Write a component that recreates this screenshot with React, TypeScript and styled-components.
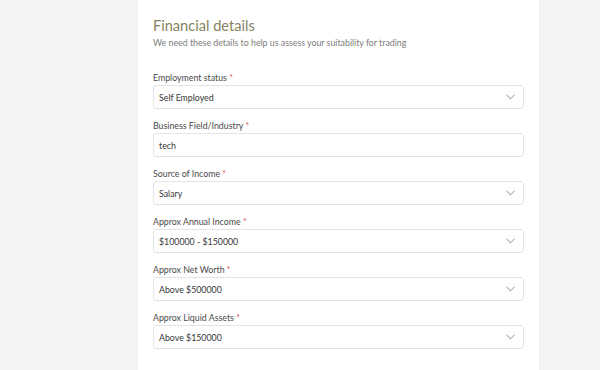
import React from "react";
import styled, { createGlobalStyle } from "styled-components";

const GlobalStyle = createGlobalStyle`
  html, body {
    margin: 0;
    padding: 0;
    background: #f3f3f5;
    font-family: Lato, "Open Sans", sans-serif;
  }
`;

const Page = styled.div`
  display: flex;
  justify-content: flex-start;
  padding-left: 138px;
  height: 370px;
  overflow: hidden;
`;

const Panel = styled.div`
  width: 401px;
  background: #ffffff;
  box-sizing: border-box;
  padding: 16px 15px 0 15px;
  min-height: 370px;
`;

const Title = styled.h2`
  margin: 0;
  font-size: 14.6px;
  font-weight: 400;
  color: #858260;
  line-height: 19px;
`;

const Subtitle = styled.p`
  margin: 1px 0 0;
  font-size: 8.8px;
  color: #7d7d7d;
  line-height: 13px;
`;

const Form = styled.div`
  display: flex;
  flex-direction: column;
  gap: 10px;
  margin-top: 22px;
  width: 371px;
`;

const Field = styled.div`
  display: flex;
  flex-direction: column;
  gap: 0;
`;

const Label = styled.label`
  font-size: 8.8px;
  color: #4a4a4a;
  line-height: 14px;
`;

const Star = styled.span`
  color: #d9534f;
`;

const Box = styled.div`
  height: 24px;
  box-sizing: border-box;
  border: 1px solid #e4e4e4;
  border-radius: 3px;
  display: flex;
  align-items: center;
  justify-content: space-between;
  padding: 0 8px 0 5px;
  font-size: 8.8px;
  color: #363636;
`;

const Chevron = () => (
  <svg width="9" height="6" viewBox="0 0 9 6" fill="none">
    <path d="M1 1.2l3.5 3.5 3.5-3.5" stroke="#c4c4c4" strokeWidth="1.5" strokeLinecap="round" strokeLinejoin="round" />
  </svg>
);

const fields: { label: string; value: string; select: boolean }[] = [
  { label: "Employment status", value: "Self Employed", select: true },
  { label: "Business Field/Industry", value: "tech", select: false },
  { label: "Source of Income", value: "Salary", select: true },
  { label: "Approx Annual Income", value: "$100000 - $150000", select: true },
  { label: "Approx Net Worth", value: "Above $500000", select: true },
  { label: "Approx Liquid Assets", value: "Above $150000", select: true },
];

export default function App() {
  return (
    <>
      <GlobalStyle />
      <Page>
        <Panel>
          <Title>Financial details</Title>
          <Subtitle>We need these details to help us assess your suitability for trading</Subtitle>
          <Form>
            {fields.map((f) => (
              <Field key={f.label}>
                <Label>
                  {f.label} <Star>*</Star>
                </Label>
                <Box>
                  <span>{f.value}</span>
                  {f.select && <Chevron />}
                </Box>
              </Field>
            ))}
          </Form>
        </Panel>
      </Page>
    </>
  );
}
